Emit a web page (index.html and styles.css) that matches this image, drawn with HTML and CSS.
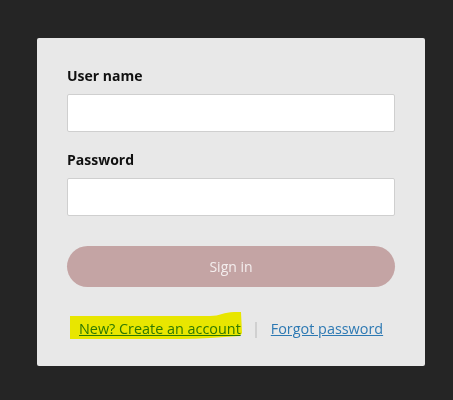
FILE: index.html
```html
<!DOCTYPE html>
<html lang="en">

<head>
    <meta charset="UTF-8" />
    <title>Sign in</title>
    <link rel="stylesheet" href="styles.css">
</head>

<body>
    <div id="login-card">
        <label for="username">User name</label>
        <input type="text" id="username">
        <label for="password" class="second">Password</label>
        <input type="password" id="password">
        <button id="signin-button">Sign in</button>
        <div class="links">
            <span class="marked">
                <a href="#">New? Create an account</a>
                <svg class="marker" width="174" height="30" viewBox="0 0 174 30">
                    <path d="M0 5 L140 5 C150 5 154 1 164 1 L171 1 L172 22 L170 25 C150 26 130 28 110 28 L0 28 Z" fill="#fffd00" />
                </svg>
            </span>
            <span class="sep"></span>
            <a href="#">Forgot password</a>
        </div>
    </div>
</body>
</html>
```

FILE: styles.css
```css
body {
    font-family: "Open Sans", sans-serif;
    background-color: #252525;
    margin: 0;
    padding: 38px 0 0 37px;
}

#login-card {
    display: flex;
    flex-direction: column;
    width: 328px;
    padding: 28px 30px 27px 30px;
    background-color: #e8e8e8;
    border-radius: 2px;
}

#login-card label {
    font-size: 14px;
    font-weight: bold;
    line-height: 19px;
    color: #111;
    margin-bottom: 9px;
}

#login-card label.second {
    margin-top: 18px;
}

#login-card input {
    box-sizing: border-box;
    height: 38px;
    border: 1px solid #cfcfcf;
    border-radius: 2px;
    background-color: #fff;
    margin: 0;
}

#signin-button {
    margin-top: 30px;
    height: 41px;
    border: none;
    border-radius: 21px;
    background-color: #c4a4a4;
    color: #f4eeee;
    font-family: "Open Sans", sans-serif;
    font-size: 14px;
}

.links {
    display: flex;
    align-items: center;
    margin-top: 32px;
    padding-left: 12px;
    font-size: 14.4px;
    line-height: 20px;
}

.links a {
    color: #2d79b3;
    text-decoration: underline;
}

.marked {
    position: relative;
}

.marker {
    position: absolute;
    left: -9px;
    top: -8px;
    mix-blend-mode: multiply;
}

.sep {
    width: 2px;
    height: 16px;
    background-color: #d0d0d0;
    margin: 2px 14px 0 14px;
}
```
